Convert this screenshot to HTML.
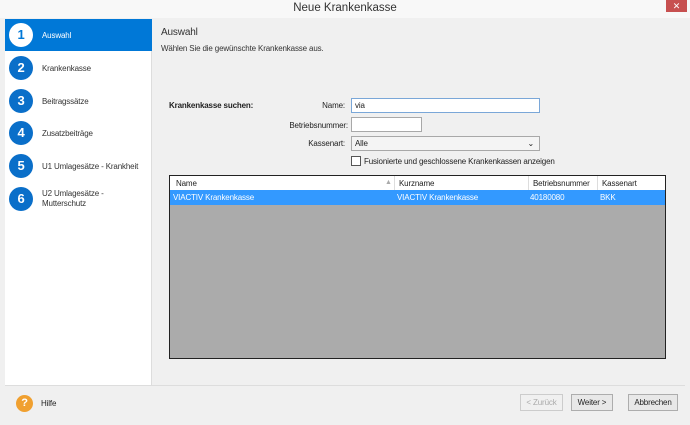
<!DOCTYPE html>
<html><head><style>
*{margin:0;padding:0;box-sizing:border-box}
body{width:690px;height:425px;background:#f0f0f0;font-family:"Liberation Sans",sans-serif;font-size:8px;letter-spacing:-0.15px;color:#222;position:relative;overflow:hidden}
.a{position:absolute}
.title{left:0;top:0;width:690px;height:18px;background:#f8f8f8;text-align:center;font-size:11.5px;line-height:17px;color:#333;letter-spacing:0}
.close{left:666px;top:0;width:21px;height:12px;background:#c75050;color:#fff;font-size:9px;text-align:center;line-height:12px}
.left{left:5px;top:19px;width:147px;height:366px;background:#fff;border-right:1px solid #ddd}
.item{position:absolute;left:0;width:147px;height:32px}
.num{position:absolute;left:4px;top:4px;width:24px;height:24px;border-radius:50%;background:#0a6fc9;color:#fff;font-weight:bold;font-size:13px;text-align:center;line-height:24px}
.lbl{position:absolute;left:37px;color:#333}
.sel{background:#0078d7}.sel .num{background:#fff;color:#0078d7}.sel .lbl{color:#fff}
.inp{background:#fff;border:1px solid #a8a8a8;height:15px;padding-left:3px;line-height:13px}
.r{text-align:right}
.btn{border:1px solid #adadad;background:#e8e8e8;height:17px;text-align:center;line-height:15px}
</style></head><body>
<div class="a title">Neue Krankenkasse</div>
<div class="a close">✕</div>
<div class="a left">
 <div class="item sel" style="top:0"><div class="num">1</div><div class="lbl" style="top:12px">Auswahl</div></div>
 <div class="item" style="top:33px"><div class="num">2</div><div class="lbl" style="top:12px">Krankenkasse</div></div>
 <div class="item" style="top:66px"><div class="num">3</div><div class="lbl" style="top:12px">Beitragssätze</div></div>
 <div class="item" style="top:98px"><div class="num">4</div><div class="lbl" style="top:12px">Zusatzbeiträge</div></div>
 <div class="item" style="top:131px"><div class="num">5</div><div class="lbl" style="top:12px">U1 Umlagesätze - Krankheit</div></div>
 <div class="item" style="top:164px"><div class="num">6</div><div class="lbl" style="top:6px;line-height:10px">U2 Umlagesätze -<br>Mutterschutz</div></div>
</div>
<div class="a" style="left:161px;top:27px;font-size:10px;color:#333">Auswahl</div>
<div class="a" style="left:161px;top:44px;color:#333">Wählen Sie die gewünschte Krankenkasse aus.</div>
<div class="a" style="left:169px;top:101px;font-weight:bold">Krankenkasse suchen:</div>
<div class="a r" style="left:260px;width:85px;top:101px">Name:</div>
<div class="a r" style="left:260px;width:88px;top:121px">Betriebsnummer:</div>
<div class="a r" style="left:260px;width:85px;top:139px">Kassenart:</div>
<div class="a inp" style="left:351px;top:98px;width:189px;border-color:#7aa7d8">via</div>
<div class="a inp" style="left:351px;top:117px;width:71px"></div>
<div class="a inp" style="left:351px;top:136px;width:189px;background:#f4f4f4">Alle<span style="position:absolute;right:5px;top:0">⌄</span></div>
<div class="a" style="left:351px;top:156px;width:10px;height:10px;border:1px solid #555;background:#fff"></div>
<div class="a" style="left:364px;top:157px">Fusionierte und geschlossene Krankenkassen anzeigen</div>
<div class="a" style="left:169px;top:175px;width:497px;height:184px;border:1px solid #222;background:#ababab">
 <div class="a" style="left:0;top:0;width:495px;height:14px;background:#fff"></div>
 <div class="a" style="left:6px;top:3px">Name</div>
 <div class="a" style="left:215px;top:3px;color:#aaa;font-size:7px">▲</div>
 <div class="a" style="left:224px;top:0;width:1px;height:14px;background:#ddd"></div>
 <div class="a" style="left:229px;top:3px">Kurzname</div>
 <div class="a" style="left:358px;top:0;width:1px;height:14px;background:#ddd"></div>
 <div class="a" style="left:363px;top:3px">Betriebsnummer</div>
 <div class="a" style="left:427px;top:0;width:1px;height:14px;background:#ddd"></div>
 <div class="a" style="left:432px;top:3px">Kassenart</div>
 <div class="a" style="left:0;top:14px;width:495px;height:15px;background:#3399ff;color:#fff">
  <span class="a" style="left:3px;top:3px">VIACTIV Krankenkasse</span>
  <span class="a" style="left:227px;top:3px">VIACTIV Krankenkasse</span>
  <span class="a" style="left:360px;top:3px">40180080</span>
  <span class="a" style="left:430px;top:3px">BKK</span>
 </div>
</div>
<div class="a" style="left:5px;top:385px;width:680px;height:1px;background:#ddd"></div>
<div class="a" style="left:16px;top:395px;width:17px;height:17px;border-radius:50%;background:#f0a030;color:#fff;font-weight:bold;font-size:11px;text-align:center;line-height:17px">?</div>
<div class="a" style="left:41px;top:399px">Hilfe</div>
<div class="a btn" style="left:520px;top:394px;width:43px;color:#aaa;border-color:#ccc;background:#f0f0f0">&lt; Zurück</div>
<div class="a btn" style="left:571px;top:394px;width:42px">Weiter &gt;</div>
<div class="a btn" style="left:628px;top:394px;width:50px">Abbrechen</div>
</body></html>
